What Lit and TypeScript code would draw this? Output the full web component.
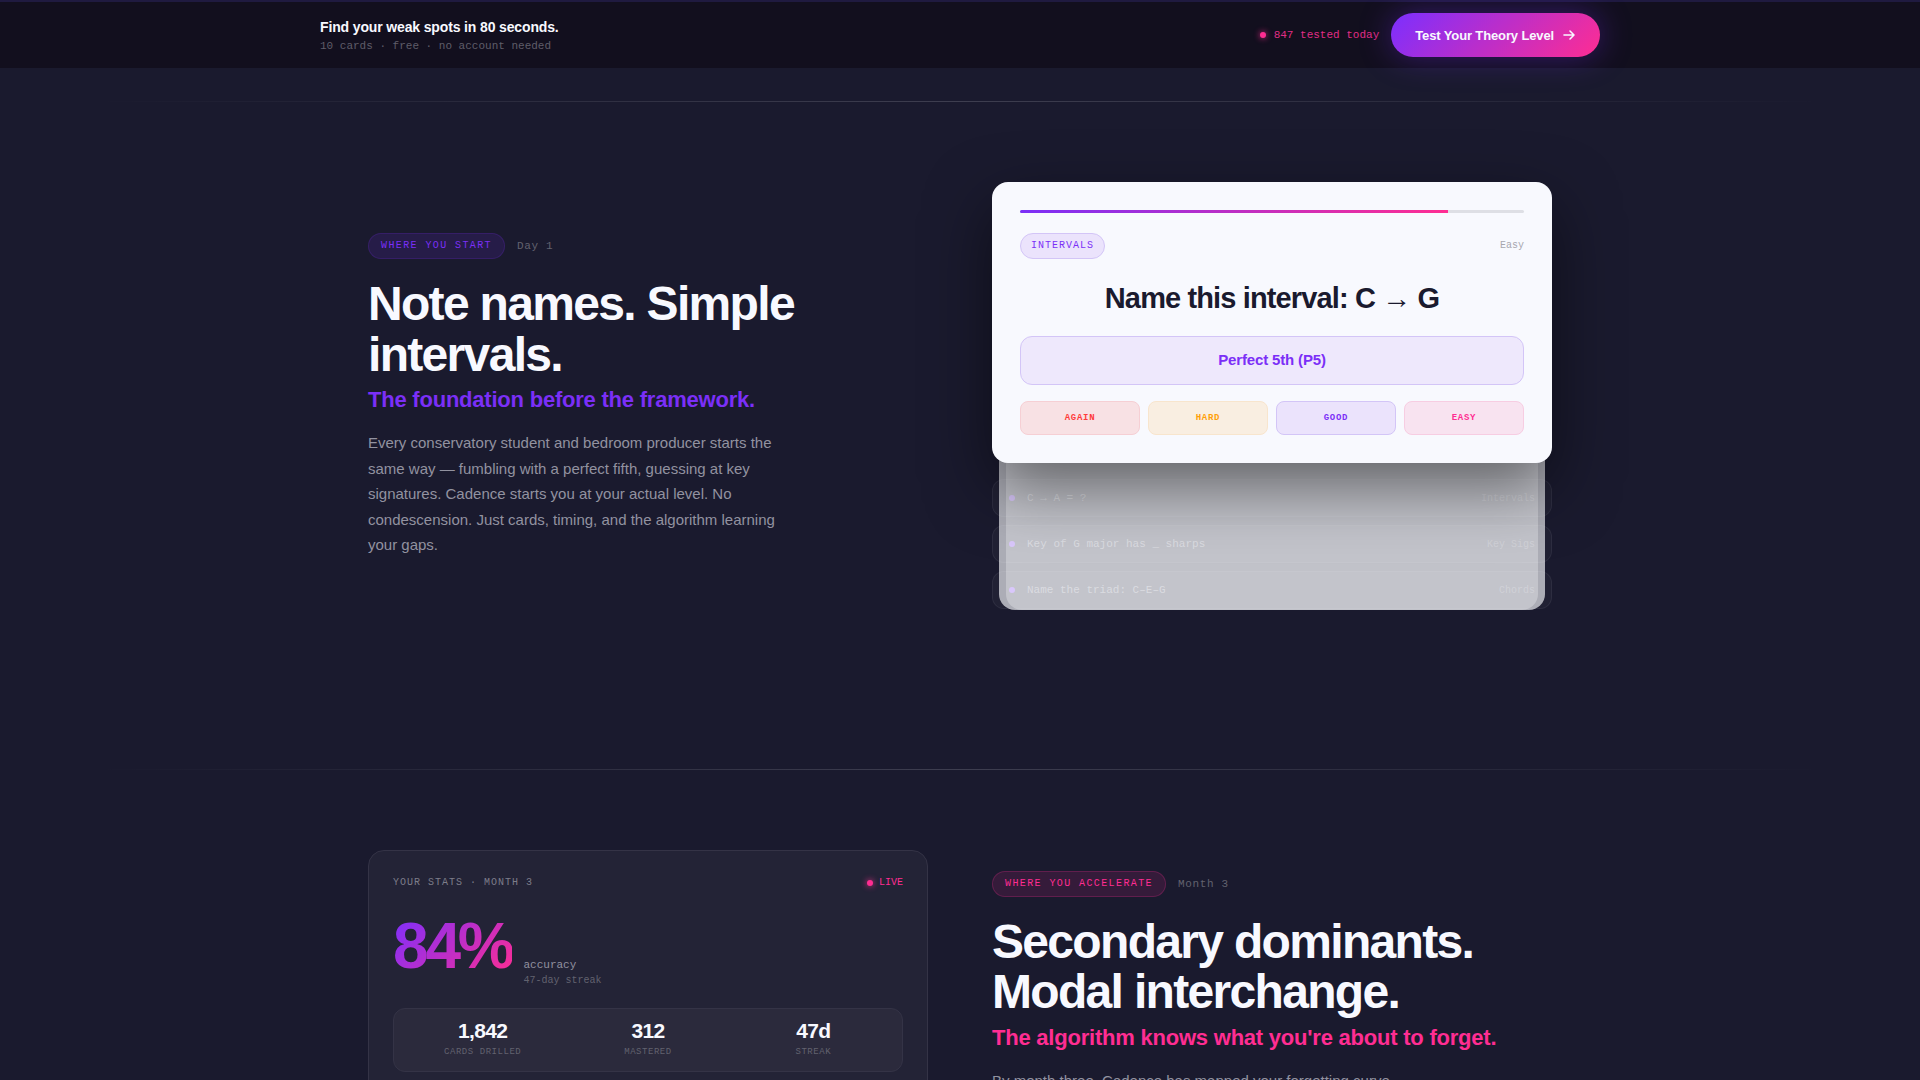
import { LitElement, html, css } from "lit";
import { customElement, property } from "lit/decorators.js";

const shared = css`
  * { box-sizing: border-box; }
  :host { display: block; font-family: "Liberation Sans", Arial, sans-serif; }
  h2, p, ul, dl, dd, dt { margin: 0; padding: 0; }
  .mono { font-family: "Liberation Mono", "Courier New", monospace; }
`;

@customElement("cta-bar")
class CtaBar extends LitElement {
  static styles = [shared, css`
    .bar { background: #120f1e; border-top: 2px solid #1f1a40; }
    .inner {
      max-width: 1280px; margin: 0 auto; height: 66px;
      display: flex; align-items: center; justify-content: space-between;
    }
    .title { font-size: 14px; line-height: 22px; font-weight: 700; letter-spacing: -0.01em; color: #f8f9ff; }
    .note { font-size: 11px; line-height: 16px; color: #5f5d69; }
    .right { display: flex; align-items: center; gap: 12px; }
    .count { display: flex; align-items: center; gap: 8px; font-size: 11px; line-height: 16px; color: #e02d86; }
    .dot { width: 6px; height: 6px; border-radius: 50%; background: #ff2d92; box-shadow: 0 0 6px #ff2d92; }
    .cta {
      display: flex; align-items: center; gap: 8px; padding: 0 24px; height: 44px;
      border-radius: 999px; color: #f8f9ff; text-decoration: none;
      font-size: 13px; font-weight: 700; letter-spacing: -0.01em;
      background: linear-gradient(135deg, #7b2fff, #ff2d92);
      box-shadow: 0 0 32px rgba(123, 47, 255, 0.35);
    }
    .cta svg { width: 14px; height: 14px; }
  `];
  render() {
    return html`
      <header class="bar">
        <div class="inner">
          <div>
            <p class="title">Find your weak spots in 80 seconds.</p>
            <p class="note mono">10 cards · free · no account needed</p>
          </div>
          <div class="right">
            <div class="count mono"><span class="dot"></span>847 tested today</div>
            <a class="cta" href="#test">Test Your Theory Level
              <svg viewBox="0 0 14 14" fill="none" stroke="currentColor" stroke-width="1.6" stroke-linecap="round" stroke-linejoin="round" aria-hidden="true">
                <path d="M2 7h10M8 3l4 4-4 4" />
              </svg>
            </a>
          </div>
        </div>
      </header>`;
  }
}

@customElement("stage-copy")
class StageCopy extends LitElement {
  @property() tone = "violet";
  @property() stage = "";
  @property() time = "";
  @property() lineOne = "";
  @property() lineTwo = "";
  @property() tagline = "";
  @property() body = "";
  static styles = [shared, css`
    .violet { --tone: #7b2ff7; --fill: rgba(123, 47, 247, 0.13); --edge: rgba(123, 47, 247, 0.18); }
    .pink { --tone: #ff2d92; --fill: rgba(255, 45, 146, 0.12); --edge: rgba(255, 45, 146, 0.22); }
    .meta { display: flex; align-items: center; gap: 12px; margin-bottom: 20px; }
    .pill {
      padding: 4px 12px; border: 1px solid var(--edge); border-radius: 999px; background: var(--fill);
      color: var(--tone); font-size: 10px; line-height: 16px; letter-spacing: 0.14em; text-transform: uppercase;
    }
    .time { font-size: 11px; line-height: 16px; letter-spacing: 0.06em; color: #62626f; }
    h2 { font-size: 48px; line-height: 1.05; font-weight: 700; letter-spacing: -0.035em; color: #f8f9ff; }
    .tagline { margin-top: 4px; font-size: 22px; line-height: 32px; font-weight: 700; letter-spacing: -0.01em; color: var(--tone); }
    .body { margin-top: 14px; max-width: 420px; font-size: 15px; line-height: 1.7; color: #9292a0; }
  `];
  render() {
    return html`
      <div class=${this.tone}>
        <div class="meta mono"><span class="pill">${this.stage}</span><span class="time">${this.time}</span></div>
        <h2>${this.lineOne}<br />${this.lineTwo}</h2>
        <p class="tagline">${this.tagline}</p>
        <p class="body">${this.body}</p>
      </div>`;
  }
}

@customElement("drill-stack")
class DrillStack extends LitElement {
  static styles = [shared, css`
    .stack { position: relative; }
    .sheet { position: absolute; border-radius: 16px; background: #f8f9fc; top: 14px; bottom: -1px; }
    .back { left: 14px; right: 14px; opacity: 0.3; }
    .middle { left: 7px; right: 7px; opacity: 0.65; }
    .card {
      position: relative; z-index: 1; padding: 28px; border-radius: 16px; background: #f8f9fe;
      box-shadow: 0 24px 64px rgba(0, 0, 0, 0.5);
    }
    .track { height: 3px; border-radius: 2px; background: #dedfe5; overflow: hidden; }
    .fill { height: 3px; background: linear-gradient(90deg, #7b2ff7, #ff2d92); }
    .top { display: flex; align-items: center; justify-content: space-between; margin-top: 20px; font-size: 10px; line-height: 16px; }
    .tag {
      padding: 4px 10px; border: 1px solid #d3c5f7; border-radius: 999px; background: #ebe3fc;
      color: #7b2ff7; letter-spacing: 0.1em;
    }
    .level { color: #a7a7ae; }
    .question { margin: 20px 0 18px; font-size: 29px; line-height: 39px; font-weight: 700; letter-spacing: -0.03em; color: #1a1a2e; text-align: center; }
    .answer {
      padding: 14px 16px 16px; border: 1px solid #d3c5f7; border-radius: 12px; background: #eee8fc;
      color: #7b2ff7; font-size: 15px; line-height: 17px; font-weight: 700; text-align: center; letter-spacing: -0.01em;
    }
    .grades { display: grid; grid-template-columns: repeat(4, 1fr); gap: 8px; margin-top: 16px; }
    button {
      height: 34px; padding: 0; border: 1px solid; border-radius: 8px;
      font-family: "Liberation Mono", "Courier New", monospace; font-size: 9px; font-weight: 700; letter-spacing: 0.08em;
    }
    .again { color: #ff3b3b; background: #f8e1e4; border-color: #f6cfd4; }
    .hard { color: #ff9f0a; background: #f9eee1; border-color: #f8e5cd; }
    .good { color: #7b2ff7; background: #ebe3fc; border-color: #d3c5f7; }
    .easy { color: #ff2d92; background: #f8e3f0; border-color: #f7cde2; }
    .queue { list-style: none; display: grid; gap: 8px; margin-top: 16px; }
    .queue li {
      display: flex; align-items: center; gap: 12px; height: 38px; padding: 0 16px;
      border: 1px solid rgba(248, 249, 255, 0.06); border-radius: 12px; background: rgba(248, 249, 255, 0.03);
      font-size: 11px; color: rgba(248, 249, 255, 0.45);
    }
    .bullet { width: 6px; height: 6px; border-radius: 50%; background: #7b2ff7; }
    .kind { margin-left: auto; font-size: 10px; color: rgba(248, 249, 255, 0.25); }
  `];
  render() {
    const grades = ["Again", "Hard", "Good", "Easy"];
    const queue = [["C → A = ?", "Intervals"], ["Key of G major has _ sharps", "Key Sigs"], ["Name the triad: C–E–G", "Chords"]];
    return html`
      <div class="stack">
        <div class="card">
          <div class="track"><div class="fill" style="width: 85%"></div></div>
          <div class="top mono"><span class="tag">INTERVALS</span><span class="level">Easy</span></div>
          <p class="question">Name this interval: C → G</p>
          <p class="answer">Perfect 5th (P5)</p>
          <div class="grades">${grades.map((g) => html`<button type="button" class=${g.toLowerCase()}>${g.toUpperCase()}</button>`)}</div>
        </div>
        <ul class="queue mono">
          ${queue.map(([q, k]) => html`<li><span class="bullet"></span><span>${q}</span><span class="kind">${k}</span></li>`)}
        </ul>
        <div class="sheet back"></div>
        <div class="sheet middle"></div>
      </div>`;
  }
}

@customElement("stats-card")
class StatsCard extends LitElement {
  static styles = [shared, css`
    .card { padding: 24px; border: 1px solid #343346; border-radius: 16px; background: #232336; }
    .head { display: flex; align-items: center; justify-content: space-between; font-size: 10px; line-height: 16px; color: #7d7d8a; }
    .name { letter-spacing: 0.1em; }
    .live { display: flex; align-items: center; gap: 6px; color: #ff2d92; }
    .dot { width: 6px; height: 6px; border-radius: 50%; background: #ff2d92; box-shadow: 0 0 6px #ff2d92; }
    .score { display: flex; align-items: baseline; gap: 12px; margin-top: 23px; }
    .big {
      font-size: 64px; line-height: 64px; font-weight: 700; letter-spacing: -0.05em;
      background: linear-gradient(135deg, #7b2fff, #ff2d92); background-clip: text; -webkit-background-clip: text; color: transparent;
    }
    .label { font-size: 11px; line-height: 16px; color: #9292a0; }
    .streak { font-size: 10px; line-height: 15px; color: #62626f; }
    .stats {
      display: grid; grid-template-columns: repeat(3, 1fr); gap: 12px; margin-top: 20px; padding: 12px;
      border: 1px solid #343346; border-radius: 12px; background: #2b2a3c; text-align: center;
    }
    .stats div { display: flex; flex-direction: column-reverse; }
    dd { font-size: 21px; line-height: 20px; font-weight: 700; letter-spacing: -0.03em; color: #f8f9ff; }
    dt { margin-top: 4px; font-size: 9px; line-height: 14px; letter-spacing: 0.06em; color: #62626f; }
  `];
  render() {
    const stats = [["1,842", "CARDS DRILLED"], ["312", "MASTERED"], ["47d", "STREAK"]];
    return html`
      <div class="card">
        <div class="head mono"><span class="name">YOUR STATS · MONTH 3</span><span class="live"><span class="dot"></span>LIVE</span></div>
        <div class="score">
          <span class="big">84%</span>
          <div class="mono"><p class="label">accuracy</p><p class="streak">47-day streak</p></div>
        </div>
        <dl class="stats">${stats.map(([n, l]) => html`<div><dt class="mono">${l}</dt><dd>${n}</dd></div>`)}</dl>
      </div>`;
  }
}

@customElement("app-root")
class AppRoot extends LitElement {
  static styles = [shared, css`
    :host { height: 100vh; overflow: hidden; background: #1a1a2e; }
    cta-bar { position: relative; }
    main { padding-top: 33px; }
    .rule { height: 1px; margin: 0 5%; background: linear-gradient(90deg, transparent, rgba(248, 249, 255, 0.16), transparent); }
    section {
      max-width: 1280px; margin: 0 auto; padding: 80px 48px 160px;
      display: grid; grid-template-columns: 1fr 1fr; gap: 64px; align-items: center;
    }
    .later { align-items: start; }
    .later stage-copy { padding-top: 21px; }
  `];
  render() {
    return html`
      <cta-bar></cta-bar>
      <main>
        <div class="rule"></div>
        <section>
          <stage-copy tone="violet" stage="Where you start" time="Day 1"
            .lineOne=${"Note names. Simple"} .lineTwo=${"intervals."}
            tagline="The foundation before the framework."
            body="Every conservatory student and bedroom producer starts the same way — fumbling with a perfect fifth, guessing at key signatures. Cadence starts you at your actual level. No condescension. Just cards, timing, and the algorithm learning your gaps."></stage-copy>
          <drill-stack></drill-stack>
        </section>
        <div class="rule"></div>
        <section class="later">
          <stats-card></stats-card>
          <stage-copy tone="pink" stage="Where you accelerate" time="Month 3"
            .lineOne=${"Secondary dominants."} .lineTwo=${"Modal interchange."}
            tagline="The algorithm knows what you're about to forget."
            body="By month three, Cadence has mapped your forgetting curve"></stage-copy>
        </section>
      </main>`;
  }
}
